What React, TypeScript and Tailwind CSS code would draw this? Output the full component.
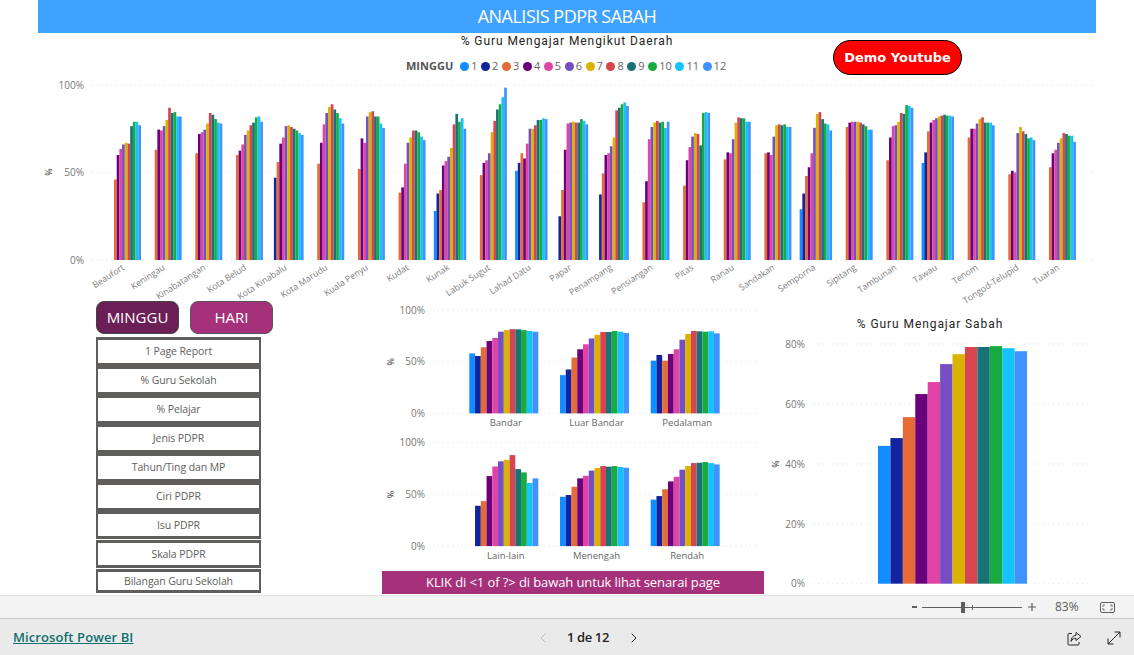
import { ChevronLeft, ChevronRight } from "lucide-react";

const COLORS = ["#118DFF", "#12239E", "#E66C37", "#6B007B", "#E044A7", "#744EC2", "#D9B300", "#D64550", "#197278", "#1AAB40", "#15C2F9", "#4092FF"];
const UI = '"Open Sans", "Noto Sans", sans-serif';
const _ = 0;

// % guru mengajar, minggu 1-12 (0 = tiada data)
const DAERAH: [string, number[]][] = [
  ["Beaufort", [_, _, 46, 60, 63.5, 66, 67, 66.5, 76.5, 79, 79, 77]],
  ["Keningau", [_, _, 63, 74.5, 74, 76.5, 80, 87, 84, 84.5, 82, 82]],
  ["Kinabatangan", [_, _, 61, 72, 73, 74.5, 78, 84, 83, 80.5, 78.5, 78]],
  ["Kota Belud", [_, _, 60, 62.5, 66, 71.5, 74, 77, 78.5, 81.5, 82, 79]],
  ["Kota Kinabalu", [_, 47, 56, 66.5, 70, 76.5, 77, 76, 75, 74, 72.5, 71.5]],
  ["Kota Marudu", [_, _, 55, 67, 77.5, 84, 87.5, 89, 86, 84, 81, 78]],
  ["Kuala Penyu", [_, _, 52, 69.5, 67, 82, 84.5, 85, 82, 82, 78, 75.5]],
  ["Kudat", [_, _, 38.5, 41.5, 55, 67, 70, 74, 74, 73, 70.5, 68.5]],
  ["Kunak", [28, 38, 40, 54, 56.5, 59, 64, 77.5, 83.5, 79, 81, 75]],
  ["Labuk Sugut", [_, _, 48.5, 55.5, 57, 61, 73, 79.5, 86, 89, 93, 98.5]],
  ["Lahad Datu", [51, 55.5, 61, 58, 66.5, 75, 75, 77, 80, 80, 81, 80.5]],
  ["Papar", [_, 25, 40, 63, 78, 78.5, 79, 78.5, 78.5, 80.5, 79.5, 77.5]],
  ["Penampang", [_, 37.5, 49.5, 60, 61, 65, 70, 85.5, 87, 89, 90, 88]],
  ["Pensiangan", [_, _, 33, 45, 69, 76, 78.5, 79.5, 78.5, 79, 75.5, 79]],
  ["Pitas", [_, _, 42.5, 57, 64.5, 70.5, 72.5, 72, 65.5, 84, 84.5, 84]],
  ["Ranau", [_, _, 57.5, 61.5, 61, 69, 78.5, 81.5, 81, 81, 79, 79]],
  ["Sandakan", [_, _, 61, 61.5, 60, 70.5, 77, 77.5, 77, 77.5, 76, 76]],
  ["Semporna", [29, 38, 48, 53, 61, 75.5, 83.5, 84.5, 80.5, 78, 77.5, 74]],
  ["Sipitang", [_, _, 76, 78.5, 79, 79, 79, 78.5, 77.5, 76.5, 74.5, 74.5]],
  ["Tambunan", [_, _, 57, 70, 76.5, 77, 79, 84, 83.5, 88.5, 88, 87]],
  ["Tawau", [55.5, 61.5, 73.5, 78.5, 80, 81, 82, 82.5, 83, 82.5, 82.5, 82]],
  ["Tenom", [_, _, 70, 75, 75, 78, 80.5, 81.5, 78.5, 78.5, 78.5, 77]],
  ["Tongod-Telupid", [_, _, 49, 51, 50, 72.5, 76, 73.5, 72, 69.5, 70, 68.5]],
  ["Tuaran", [_, _, 53, 61, 63, 67, 69.5, 72.5, 72, 71, 71, 67.5]],
];

const LOKASI: [string, number[]][] = [
  ["Bandar", [58, 55.5, 64, 70, 73, 79, 80.5, 81.5, 81.3, 80.5, 79.7, 79]],
  ["Luar Bandar", [37, 42.5, 54, 62, 66.8, 72.5, 76, 78.7, 78.7, 79.7, 79, 77.7]],
  ["Pedalaman", [51, 56.5, 51, 57.4, 62, 71.3, 76.8, 79.7, 79.4, 79, 79.4, 77.4]],
];

const PERINGKAT: [string, number[]][] = [
  ["Lain-lain", [_, 39, 43.5, 67.7, 77, 82, 83.5, 88, 74.5, 71.3, 61, 65.5]],
  ["Menengah", [47.7, 49.4, 57.4, 65.5, 68, 73, 75.5, 77.4, 76.8, 77.4, 76.5, 75.8]],
  ["Rendah", [45, 48.4, 55, 62.6, 67, 73.9, 77.4, 80.3, 80.6, 81.3, 80.3, 79]],
];

const SABAH = [46, 48.6, 55.6, 63.3, 67.3, 73.3, 76.6, 79, 79, 79.3, 78.6, 77.6];

const NAV: [string, string][] = [
  ["1 Page Report", "h-[29px]"],
  ["% Guru Sekolah", "h-[29px]"],
  ["% Pelajar", "h-[29px]"],
  ["Jenis PDPR", "h-[29px]"],
  ["Tahun/Ting dan MP", "h-[29px]"],
  ["Ciri PDPR", "h-[29px]"],
  ["Isu PDPR", "h-[28px]"],
  ["Skala PDPR", "h-[28px] mt-px"],
  ["Bilangan Guru Sekolah", "h-[24px] mt-px"],
];

function Bars({ values, x, barW, y0, scale, halo }: { values: number[]; x: number; barW: number; y0: number; scale: number; halo: number }) {
  return (
    <g>
      {values.map((v, i) =>
        v > 0 ? <rect key={i} x={x + i * barW - halo} y={y0 - v * scale - 3} width={barW + halo * 2} height={v * scale + 3} fill="#fff" /> : null
      )}
      {values.map((v, i) =>
        v > 0 ? <rect key={i} x={x + i * barW} y={y0 - v * scale} width={barW} height={v * scale} fill={COLORS[i]} /> : null
      )}
    </g>
  );
}

function Grid({ ticks, x1, x2, labelX }: { ticks: [string, number][]; x1: number; x2: number; labelX: number }) {
  return (
    <g>
      {ticks.map(([label, y]) => (
        <g key={label}>
          <line x1={x1} x2={x2} y1={y} y2={y} stroke="#e4e4e4" strokeDasharray="1.2 3.6" />
          <text x={labelX} y={y + 3.5} textAnchor="end" fontSize={10} fill="#777">{label}</text>
        </g>
      ))}
    </g>
  );
}

function AxisTitle({ x, y }: { x: number; y: number }) {
  return (
    <text x={x} y={y} transform={`rotate(-90 ${x} ${y})`} textAnchor="middle" fontSize={9} fill="#333">%</text>
  );
}

function MainChart() {
  return (
    <svg className="block overflow-visible" width={1134} height={225} viewBox="0 75 1134 225" style={{ fontFamily: UI }}>
      <Grid ticks={[["100%", 85], ["50%", 172.5], ["0%", 260]]} x1={92} x2={1092} labelX={84} />
      <AxisTitle x={52} y={172} />
      {DAERAH.map(([name, values], i) => (
        <Bars key={name} values={values} x={108.6 + i * 40.65} barW={2.7} y0={260} scale={1.75} halo={3} />
      ))}
      {DAERAH.map(([name], i) => {
        const cx = 125 + i * 40.65;
        return (
          <text key={name} x={cx} y={269} textAnchor="end" fontSize={8.8} fill="#808080" transform={`rotate(-33 ${cx} 269)`}>{name}</text>
        );
      })}
    </svg>
  );
}

function MidCharts() {
  const panel = (rows: [string, number[]][], top: number) => {
    const y0 = top + 103.4;
    return (
      <g>
        <Grid ticks={[["100%", top], ["50%", top + 51.7], ["0%", y0]]} x1={433} x2={757} labelX={425} />
        <AxisTitle x={394} y={top + 51.7} />
        {rows.map(([name, values], i) => {
          const x = 469.3 + i * 90.7;
          return (
            <g key={name}>
              <Bars values={values} x={x} barW={5.75} y0={y0} scale={1.034} halo={3} />
              <text x={x + 36.5} y={y0 + 13} textAnchor="middle" fontSize={9.5} fill="#666">{name}</text>
            </g>
          );
        })}
      </g>
    );
  };
  return (
    <svg className="block" width={388} height={271} viewBox="382 300 388 271" style={{ fontFamily: UI }}>
      {panel(LOKASI, 310)}
      {panel(PERINGKAT, 442.7)}
    </svg>
  );
}

function SabahChart() {
  return (
    <svg className="block" width={364} height={263} viewBox="770 332 364 263" style={{ fontFamily: UI }}>
      <Grid ticks={[["80%", 344], ["60%", 404], ["40%", 464], ["20%", 524], ["0%", 583.7]]} x1={813} x2={1092} labelX={805} />
      <AxisTitle x={779} y={464} />
      <Bars values={SABAH} x={878} barW={12.42} y0={583.7} scale={2.996} halo={4} />
    </svg>
  );
}

function ZoomBar() {
  return (
    <div className="flex h-[23px] items-center border-t border-[#e3e3e3] bg-[#f3f3f3] text-[#605e5c]">
      <span className="ml-[912px] h-[2px] w-[5px] bg-[#605e5c]" />
      <div className="relative ml-[5px] h-px w-[100px] bg-[#605e5c]">
        <span className="absolute left-[39px] top-[-5px] h-[11px] w-[4px] bg-[#605e5c]" />
        <span className="absolute left-[50px] top-[-2px] h-[5px] w-px bg-[#605e5c]" />
      </div>
      <svg className="ml-[6px]" width="8" height="8" viewBox="0 0 8 8"><path d="M4 0v8M0 4h8" stroke="#605e5c" strokeWidth="1.2" /></svg>
      <span className="ml-[19px] text-[12px]" style={{ fontFamily: UI }}>83%</span>
      <svg className="ml-[21px]" width="15" height="11" viewBox="0 0 15 11" fill="none" stroke="#605e5c">
        <rect x="0.5" y="0.5" width="14" height="10" rx="1.5" />
        <path d="M5 3H3v2M10 3h2v2M5 8H3V6M10 8h2V6" strokeWidth="0.8" />
      </svg>
    </div>
  );
}

function Footer() {
  return (
    <div className="relative flex h-[37px] items-center border-t border-[#c8c8c8] bg-[#eaeaea] pt-[2px]" style={{ fontFamily: UI }}>
      <a className="ml-[13px] whitespace-nowrap text-[13px] font-semibold tracking-[0.1px] text-[#0f6f6f] underline">Microsoft Power BI</a>
      <div className="absolute left-[535px] flex items-center text-[13px] font-semibold text-[#252423]">
        <ChevronLeft size={16} strokeWidth={1.25} className="text-[#b3b0ad]" />
        <span className="ml-[15px] w-[44px] whitespace-nowrap text-center tracking-[-0.4px]">1 de 12</span>
        <ChevronRight size={16} strokeWidth={1.5} className="ml-[16px] text-[#252423]" />
      </div>
      <svg className="absolute left-[1067px]" width="15" height="15" viewBox="0 0 15 15" fill="none" stroke="#252423">
        <path d="M5 2.5H2a1 1 0 0 0-1 1V13a1 1 0 0 0 1 1h9a1 1 0 0 0 1-1v-2" />
        <path d="M9 1.5l5 4-5 4V7.3C7 7.3 5.2 8 4 10.5c0-3.5 2-6 5-6.2z" />
      </svg>
      <svg className="absolute left-[1107px]" width="14" height="14" viewBox="0 0 14 14" fill="none" stroke="#252423">
        <path d="M1 13L13 1M7.5 1H13v5.5M1 7.5V13h5.5" />
      </svg>
    </div>
  );
}

export default function App() {
  return (
    <div className="flex h-[655px] w-[1134px] flex-col overflow-hidden bg-white">
      <div className="relative h-[595px] shrink-0">
        <div className="mx-[38px] flex h-[33px] items-center justify-center bg-[#40a2ff] text-[18px] tracking-[-0.5px] text-white" style={{ fontFamily: UI }}>
          ANALISIS PDPR SABAH
        </div>
        <h2 className="mt-[1px] h-[15px] text-center text-[12px] leading-[15px] tracking-[0.93px] text-[#252423]" style={{ fontFamily: "Roboto, sans-serif" }}>
          % Guru Mengajar Mengikut Daerah
        </h2>
        <div className="mt-[10px] flex h-[15px] items-center pl-[406px] text-[11px] text-[#666]" style={{ fontFamily: UI }}>
          <b className="mr-[7px] font-bold text-[#555]">MINGGU</b>
          {COLORS.map((c, i) => (
            <span key={c} className="mr-[3.6px] flex items-center gap-[2px]">
              <span className="h-[9px] w-[9px] rounded-full" style={{ backgroundColor: c }} />
              {i + 1}
            </span>
          ))}
        </div>
        <div className="h-px" />
        <MainChart />
        <a className="absolute left-[833px] top-[40px] flex h-[35px] w-[129px] items-center justify-center rounded-full border border-black bg-[#ff0000] text-[13px] font-bold text-white" style={{ fontFamily: '"DejaVu Sans", sans-serif' }}>
          Demo Youtube
        </a>
        <div className="flex h-[295px]" style={{ fontFamily: UI }}>
          <div className="ml-[96px] w-[286px] pt-px">
            <div className="flex gap-[11px]">
              <button className="h-[33px] w-[83px] rounded-lg border border-[#444] bg-[#6c1f56] text-[15px] text-white">MINGGU</button>
              <button className="h-[33px] w-[83px] rounded-lg border border-[#555] bg-[#a6317b] text-[15px] text-white">HARI</button>
            </div>
            <div className="mt-[3px] flex w-[165px] flex-col">
              {NAV.map(([label, h]) => (
                <div key={label} className={`flex items-center justify-center border-x-2 border-y-[3px] border-[#605e5c] pt-px text-[10.5px] tracking-[-0.1px] text-[#605e5c] ${h}`}>
                  {label}
                </div>
              ))}
            </div>
          </div>
          <div className="w-[388px]">
            <MidCharts />
            <div className="flex h-[23px] w-[382px] items-center justify-center bg-[#a6317b] text-[13px] tracking-[-0.1px] text-white">
              KLIK di &lt;1 of ?&gt; di bawah untuk lihat senarai page
            </div>
          </div>
          <div className="w-[364px]">
            <h2 className="h-[32px] pr-[44px] pt-[16px] text-center text-[12px] leading-[16px] tracking-[0.93px] text-[#252423]" style={{ fontFamily: "Roboto, sans-serif" }}>
              % Guru Mengajar Sabah
            </h2>
            <SabahChart />
          </div>
        </div>
      </div>
      <ZoomBar />
      <Footer />
    </div>
  );
}
